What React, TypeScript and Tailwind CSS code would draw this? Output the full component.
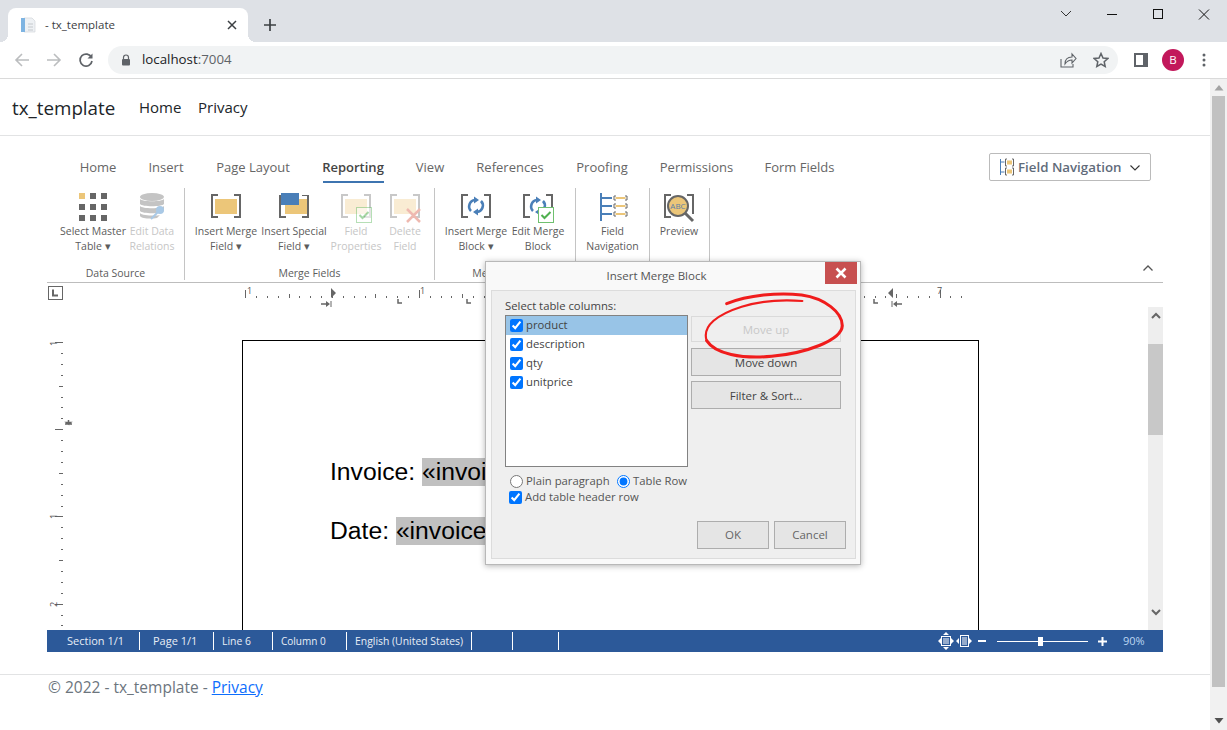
import React from "react";

const G = "#666666";
const Y = "#ecc679";
const B = "#4a7fb8";

function Brackets({ c = G }: { c?: string }) {
  return (
    <>
      <path d="M8 3H2V25H8" fill="none" stroke={c} strokeWidth="2" />
      <path d="M24 3H30V25H24" fill="none" stroke={c} strokeWidth="2" />
    </>
  );
}
function Check({ x, y }: { x: number; y: number }) {
  return (
    <g transform={`translate(${x} ${y})`}>
      <rect x="0.5" y="0.5" width="15" height="15" fill="#fff" stroke="#6fc06f" />
      <path d="M3.5 8l3 3 6-6" fill="none" stroke="#4fb04f" strokeWidth="2" />
    </g>
  );
}
const Svg = ({ children }: { children: React.ReactNode }) => (
  <svg width="32" height="32" viewBox="0 0 32 32" className="block">{children}</svg>
);
const Grid = () => (
  <Svg>
    {[0, 1, 2].flatMap((r) =>
      [0, 1, 2].map((c) => (
        <rect key={`${r}${c}`} x={2 + c * 11} y={1 + r * 11} width="6" height="6" fill={r === 0 && c === 0 ? Y : G} />
      ))
    )}
  </Svg>
);
const Db = () => (
  <Svg>
    <ellipse cx="16" cy="5" rx="12" ry="4" fill="#c4c4c4" />
    <path d="M4 7c2 3 22 3 24 0v5c-2 3-22 3-24 0zM4 14c2 3 22 3 24 0v5c-2 3-22 3-24 0zM4 21c2 3 18 3 20 2l-3 3c-5 1-15 1-17-2z" fill="#c4c4c4" />
    <circle cx="24" cy="18" r="4" fill="#a9c9e6" />
    <path d="M22 20l-7 7" stroke="#a9c9e6" strokeWidth="2" />
  </Svg>
);
const MergeField = () => (
  <Svg><Brackets /><rect x="5" y="7" width="22" height="15" fill={Y} /></Svg>
);
const SpecialField = () => (
  <Svg>
    <Brackets />
    <rect x="0" y="0" width="32" height="3" fill="#fff" />
    <rect x="7" y="7" width="22" height="15" fill={Y} />
    <rect x="3" y="1" width="18" height="12" fill={B} />
  </Svg>
);
const FieldProps = () => (
  <Svg>
    <Brackets c="#c8c8c8" />
    <rect x="5" y="7" width="22" height="15" fill="#f9ecd3" />
    <g opacity="0.5"><Check x={16} y={15} /></g>
  </Svg>
);
const DeleteField = () => (
  <Svg>
    <Brackets c="#c8c8c8" />
    <rect x="5" y="7" width="22" height="15" fill="#f9ecd3" />
    <path d="M18 17l13 13M31 17L18 30" stroke="#eeb9b0" strokeWidth="2.5" />
  </Svg>
);
const Cycle = () => (
  <>
    <path d="M15 8a6.500 6.500 0 0 0-4 11" fill="none" stroke={B} strokeWidth="2.600" />
    <path d="M17 20a6.500 6.500 0 0 0 4-11" fill="none" stroke={B} strokeWidth="2.600" />
    <path d="M14 4.500l5 3.500-5 3.500zM18 16.500l-5 3.500 5 3.500z" fill={B} />
  </>
);
const MergeBlock = () => <Svg><Brackets /><Cycle /></Svg>;
const EditBlock = () => <Svg><Brackets /><Cycle /><Check x={16} y={15} /></Svg>;
const Nav = ({ s = 32 }: { s?: number }) => (
  <svg width={s} height={s} viewBox="0 0 32 32" className="block">
    <path d="M4 1v28" stroke={B} strokeWidth="2" />
    <path d="M4 6h11M4 14h11M4 22h11" stroke={B} strokeWidth="2" />
    {[4, 12, 20].map((y) => (
      <g key={y}>
        <path d={`M19 ${y}h-2v4h2M28 ${y}h2v4h-2`} fill="none" stroke={G} strokeWidth="1" />
        <rect x="18.5" y={y + 1} width="10" height="2" fill={Y} />
      </g>
    ))}
  </svg>
);
const NavSmall = () => (
  <svg width="16" height="18" viewBox="0 0 16 18" className="block">
    <path d="M1.500 1v16M1.500 4h4M1.500 14h4" stroke={B} strokeWidth="1" />
    <path d="M8 1H6.500v7H8M13 1h1.500v7H13M8 10H6.500v7H8M13 10h1.500v7H13" fill="none" stroke={G} strokeWidth="1" />
    <rect x="8" y="2.500" width="5" height="4" fill={Y} />
    <rect x="8" y="11.500" width="5" height="4" fill={Y} />
  </svg>
);
const Preview = () => (
  <Svg>
    <Brackets />
    <rect x="24" y="22" width="8" height="4" fill="#fff" />
    <path d="M22 21l8 8" stroke={G} strokeWidth="3" />
    <circle cx="15" cy="14" r="10" fill={Y} stroke={G} strokeWidth="2" />
    <text x="15" y="17" textAnchor="middle" fontSize="8" fill="#5b7fa8" fontFamily="Open Sans, sans-serif">ABC</text>
  </Svg>
);

function RBtn({ w, icon, l1, l2, off }: { w: string; icon: React.ReactNode; l1: string; l2: string; off?: boolean }) {
  return (
    <div className={`${w} flex flex-col items-center pt-[4px] text-[10.5px] leading-[15px] whitespace-nowrap ${off ? "text-[#c6c6c6]" : "text-[#5c5c5c]"}`}>
      {icon}
      <span>{l1}</span>
      <span>{l2}</span>
    </div>
  );
}
function Group({ w, pl, label, children }: { w: string; pl: string; label: string; children: React.ReactNode }) {
  return (
    <div className={`${w} h-[92px] flex flex-col border-r border-[#c4c4c4]`}>
      <div className={`flex h-[78px] ${pl}`}>{children}</div>
      <div className="h-[14px] leading-[15px] text-[10.5px] text-[#5c5c5c] text-center">{label}</div>
    </div>
  );
}

const tabs: [string, string][] = [
  ["Home", "w-[38px]"], ["Insert", "w-[35px]"], ["Page Layout", "w-[76px]"], ["Reporting", "w-[61px]"], ["View", "w-[30px]"],
  ["References", "w-[67px]"], ["Proofing", "w-[54px]"], ["Permissions", "w-[72px]"], ["Form Fields", "w-[71px]"],
];

function Ruler() {
  const ticks: React.ReactNode[] = [];
  for (let i = -8; i < 60; i++) {
    const x = 285 + i * 10.85;
    if (x < 195 || x > 925) continue;
    const major = (i + 800) % 8 === 0;
    const mid = (i + 800) % 4 === 0 && !major;
    ticks.push(<rect key={i} x={Math.round(x)} y={mid ? 11 : major ? 7 : 13} width="1" height={mid ? 4 : major ? 8 : 2} fill={G} />);
  }
  return (
    <svg width="1116" height="24" viewBox="0 0 1116 24" className="block">
      <rect x="1.5" y="3.5" width="14" height="13" fill="#fff" stroke={G} />
      <path d="M6 6.500v6h5" fill="none" stroke={G} strokeWidth="2" />
      {ticks}
      <text x="200" y="11" fontSize="9" fill="#555" fontFamily="Open Sans, sans-serif">1</text>
      <text x="373" y="11" fontSize="9" fill="#555" fontFamily="Open Sans, sans-serif">1</text>
      <text x="890" y="11" fontSize="9" fill="#555" fontFamily="Open Sans, sans-serif">7</text>
      <path d="M284 5l5 5-5 5zM846 5l-5 5 5 5z" fill={G} />
      <path d="M274 21h6M855 21h-6" stroke={G} strokeWidth="1.500" fill="none" />
      <path d="M279 18l4 3-4 3zM850 18l-4 3 4 3z" fill={G} />
      <path d="M284 18v6M845 18v6" stroke={G} strokeWidth="1" fill="none" />
      <path d="M351 16v4h4M420 16v4h4M827 16v4h4" stroke={G} strokeWidth="1.500" fill="none" />
    </svg>
  );
}
function VRuler() {
  const ticks: React.ReactNode[] = [];
  for (let i = 0; i < 28; i++) {
    const y = 35 + i * 10.9;
    const major = i % 8 === 0;
    const mid = i % 4 === 0 && !major;
    ticks.push(<rect key={i} x={major ? 8 : mid ? 12 : 14} y={Math.round(y)} width={major ? 8 : mid ? 4 : 2} height="1" fill={G} />);
  }
  return (
    <svg width="27" height="323" viewBox="0 0 27 323" className="block shrink-0">
      {ticks}
      <text x="0" y="0" fontSize="9" fill="#555" fontFamily="Open Sans, sans-serif" transform="translate(10 39) rotate(-90)">1</text>
      <text x="0" y="0" fontSize="9" fill="#555" fontFamily="Open Sans, sans-serif" transform="translate(10 212) rotate(-90)">1</text>
      <text x="0" y="0" fontSize="9" fill="#555" fontFamily="Open Sans, sans-serif" transform="translate(10 300) rotate(-90)">2</text>
      <path d="M18 117h7M21.500 113v4l-2-1.500h4l-2 1.500" stroke={G} strokeWidth="1.500" fill="none" />
    </svg>
  );
}

function ListRow({ t, sel }: { t: string; sel?: boolean }) {
  return (
    <div className={`h-[19px] flex items-center pl-[4px] gap-[3px] ${sel ? "bg-[#98c4e7]" : ""}`}>
      <input type="checkbox" checked readOnly className="w-[13px] h-[13px] m-0 accent-[#0075ff]" />
      <span className="pb-[1px] leading-[16px]">{t}</span>
    </div>
  );
}
const dlgBtn = "border border-[#adadad] bg-[#e5e5e5] flex items-center justify-center text-[11.500px]";

function Dialog() {
  return (
    <div className="absolute left-[485px] top-[261px] w-[376px] h-[304px] bg-[#f9f9f9] border border-[#b8b8b8] shadow-[0_1px_6px_rgba(0,0,0,0.3)] flex flex-col text-[#444] text-[11.300px]">
      <div className="h-[28px] flex justify-center items-center text-[11.500px] text-[#555] pr-[33px]">Insert Merge Block</div>
      <div className="absolute right-[3px] top-0 w-[32px] h-[22px] bg-[#c75050] flex items-center justify-center">
        <svg width="12" height="12" viewBox="0 0 12 12"><path d="M1.500 1.500l9 9M10.500 1.500l-9 9" stroke="#fff" strokeWidth="2.600" /></svg>
      </div>
      <div className="ml-[5px] w-[365px] h-[269px] bg-[#efefef] border border-[#dcdcdc] pl-[13px] pt-[6px] flex flex-col">
        <div className="h-[18px] leading-[17px] text-[#444]">Select table columns:</div>
        <div className="flex">
          <div className="w-[183px] h-[152px] bg-white border border-[#828282] text-[#444]">
            <ListRow t="product" sel />
            <ListRow t="description" />
            <ListRow t="qty" />
            <ListRow t="unitprice" />
          </div>
          <div className="ml-[3px] w-[150px] flex flex-col pt-[1px]">
            <div className="h-[26px] mb-[6px] pt-[1px] border border-[#dadada] bg-[#efefef] text-[#c8c8c8] flex items-center justify-center text-[11.500px]">Move up</div>
            <div className={`h-[28px] mb-[5px] pt-[1px] ${dlgBtn}`}>Move down</div>
            <div className={`h-[28px] pt-[1px] ${dlgBtn}`}>Filter &amp; Sort...</div>
          </div>
        </div>
        <div className="h-[16px] mt-[6px] flex items-center pl-[5px] text-[#555] leading-[16px]">
          <input type="radio" readOnly className="w-[13px] h-[13px] m-0" />
          <span className="ml-[3px] w-[91px]">Plain paragraph</span>
          <input type="radio" checked readOnly className="w-[13px] h-[13px] m-0 accent-[#0075ff]" />
          <span className="ml-[3px]">Table Row</span>
        </div>
        <div className="h-[16px] flex items-center pl-[4px] text-[#555] leading-[16px]">
          <input type="checkbox" checked readOnly className="w-[13px] h-[13px] m-0 accent-[#0075ff]" />
          <span className="ml-[3px]">Add table header row</span>
        </div>
        <div className="flex justify-end gap-[5px] mt-[16px] pr-[9px] text-[#666]">
          <div className={`w-[72px] h-[28px] ${dlgBtn}`}>OK</div>
          <div className={`w-[72px] h-[28px] ${dlgBtn}`}>Cancel</div>
        </div>
      </div>
      <svg width="160" height="80" viewBox="615 81 480 240" className="absolute left-[204px] top-[24px]">
        <path d="M725 134C790 108 880 100 950 108C1020 118 1072 160 1072 200C1070 245 960 283 860 292C770 300 690 285 665 245" fill="none" stroke="#f01c1c" strokeWidth="9" strokeLinecap="round" />
        <path d="M665 245C650 200 700 165 770 143C830 125 900 122 952 126" fill="none" stroke="#f01c1c" strokeWidth="6.500" strokeLinecap="round" />
      </svg>
    </div>
  );
}

function Browser() {
  return (
    <>
      <div className="h-[42px] bg-[#dee1e6] flex items-end pl-[8px] relative">
        <div className="relative w-[240px] h-[34px] bg-white rounded-t-[8px] flex items-center pl-[12px]">
          <div className="absolute -left-[8px] bottom-0 w-[8px] h-[8px] bg-[radial-gradient(circle_at_0_0,#dee1e6_8px,#ffffff_8px)]" />
          <div className="absolute -right-[8px] bottom-0 w-[8px] h-[8px] bg-[radial-gradient(circle_at_100%_0,#dee1e6_8px,#ffffff_8px)]" />
          <svg width="16" height="16" viewBox="0 0 16 16" className="shrink-0">
            <path d="M4 1h8l3 3v11H4z" fill="#eef1f4" stroke="#d3d6da" strokeWidth="0.700" />
            <rect x="1" y="1" width="4" height="14" fill="#7eb4e2" />
            <path d="M8 7h5M8 10h5M8 13h5" stroke="#c4c8cc" />
          </svg>
          <span className="ml-[9px] text-[11.500px] text-[#3c4043]">- tx_template</span>
          <svg width="10" height="10" viewBox="0 0 10 10" className="absolute right-[11px] top-[12px]"><path d="M1 1l8 8M9 1l-8 8" stroke="#3c4043" strokeWidth="1.500" /></svg>
        </div>
        <svg width="14" height="14" viewBox="0 0 14 14" className="ml-[15px] mb-[10px]"><path d="M7 1v12M1 7h12" stroke="#3c4043" strokeWidth="1.700" /></svg>
        <div className="ml-auto self-start flex">
          <svg width="46" height="28" viewBox="0 0 46 28"><path d="M18 11l5 5 5-5" fill="none" stroke="#333" strokeWidth="1" /></svg>
          <svg width="46" height="28" viewBox="0 0 46 28"><path d="M18 14.500h10" stroke="#111" strokeWidth="1" /></svg>
          <svg width="46" height="28" viewBox="0 0 46 28"><rect x="18.500" y="9.500" width="9" height="9" fill="none" stroke="#111" /></svg>
          <svg width="46" height="28" viewBox="0 0 46 28"><path d="M18 9.500l10 10M28 9.500l-10 10" stroke="#111" strokeWidth="1" /></svg>
        </div>
      </div>
      <div className="h-[37px] bg-white border-b border-[#dadada] flex items-center pb-[1px]">
        <svg width="16" height="16" viewBox="0 0 16 16" className="ml-[14px]"><path d="M15 8H2M8 2L2 8l6 6" fill="none" stroke="#bbbdbf" strokeWidth="1.600" /></svg>
        <svg width="16" height="16" viewBox="0 0 16 16" className="ml-[16px]"><path d="M1 8h13M8 2l6 6-6 6" fill="none" stroke="#bbbdbf" strokeWidth="1.600" /></svg>
        <svg width="16" height="16" viewBox="0 0 16 16" className="ml-[16px]"><path d="M13.500 5.500A6 6 0 1 0 14 9" fill="none" stroke="#5f6368" strokeWidth="1.700" /><path d="M14.500 1.500v5h-5z" fill="#5f6368" /></svg>
        <div className="ml-[14px] w-[1010px] h-[28px] rounded-full bg-[#f1f3f4] flex items-center pl-[12px] relative">
          <svg width="12" height="12" viewBox="0 0 12 12"><path d="M3.500 5V3.500a2.500 2.500 0 0 1 5 0V5" fill="none" stroke="#5f6368" strokeWidth="1.200" /><rect x="2" y="5" width="8" height="6.500" rx="1" fill="#5f6368" /></svg>
          <span className="ml-[10px] pt-[1px] text-[13.300px] text-[#202124]">localhost<span className="text-[#5f6368]">:7004</span></span>
          <svg width="18" height="18" viewBox="0 0 18 18" className="absolute right-[41px] top-[5px]"><path d="M2 8v8h12v-3" fill="none" stroke="#5f6368" strokeWidth="1.100" /><path d="M6 13c0-5 3-7 7-7V3l4 4.500-4 4.500V9c-3 0-5 1-7 4z" fill="none" stroke="#5f6368" strokeWidth="1.100" /></svg>
          <svg width="16" height="16" viewBox="0 0 16 16" className="absolute right-[9px] top-[6px]"><path d="M8 1.500l2 4.500 4.800.5-3.600 3.200 1 4.800L8 12.200 3.800 14.500l1-4.800L1.200 6.500 6 6z" fill="none" stroke="#5f6368" strokeWidth="1.500" /></svg>
        </div>
        <svg width="14" height="14" viewBox="0 0 14 14" className="ml-[16px]"><path d="M0 0h14v14H0zM2 2v10h7V2z" fill="#5f6368" fillRule="evenodd" /></svg>
        <div className="ml-[14px] w-[22px] h-[22px] rounded-full bg-[#c2185b] text-white text-[11.500px] flex items-center justify-center">B</div>
        <svg width="4" height="14" viewBox="0 0 4 14" className="ml-[18px]"><circle cx="2" cy="2" r="1.500" fill="#5f6368" /><circle cx="2" cy="7" r="1.500" fill="#5f6368" /><circle cx="2" cy="12" r="1.500" fill="#5f6368" /></svg>
      </div>
    </>
  );
}

export default function App() {
  return (
    <div className="relative w-[1227px] h-[730px] overflow-hidden bg-white font-['Open_Sans',sans-serif]">
      <Browser />
      <div className="flex h-[651px]">
        <div className="w-[1210px] flex flex-col">
          <div className="h-[57px] border-b border-[#e2e3e4] flex items-center pl-[12px] text-[#212529]">
            <span className="text-[18.800px] w-[127px] pt-[2px]">tx_template</span>
            <span className="text-[15px] w-[59px]">Home</span>
            <span className="text-[15px]">Privacy</span>
          </div>
          <div className="mx-[47px] w-[1116px] mt-[17px]">
            <div className="flex items-start justify-between pr-[12px]">
              <div className="flex gap-[31.500px] pl-[32px]">
                {tabs.map(([t, w]) => (
                  <div key={t} className={`${w} h-[30px] flex justify-center pt-[3px] whitespace-nowrap text-[13px] leading-[22px] ${t === "Reporting" ? "border-b-2 border-[#3d74b0] text-[#444] font-semibold" : "text-[#666]"}`}>{t}</div>
                ))}
              </div>
              <div className="w-[162px] h-[28px] border border-[#bbb] rounded-[2px] flex items-center pl-[9px] bg-white">
                <NavSmall />
                <span className="ml-[3px] pt-[2px] text-[13.300px] font-semibold text-[#5f6b7a] whitespace-nowrap">Field Navigation</span>
                <svg width="10" height="6" viewBox="0 0 10 6" className="ml-[9px] mt-[2px]"><path d="M0.500 0.500L5 5l4.500-4.500" fill="none" stroke="#333" strokeWidth="1.100" /></svg>
              </div>
            </div>
            <div className="mt-[5px] h-[95px] border-b border-[#bdbdbd] flex relative">
              <Group w="w-[138px]" pl="pl-[13px]" label="Data Source">
                <RBtn w="w-[66px]" icon={<Grid />} l1="Select Master" l2="Table ▾" />
                <RBtn w="w-[52px]" icon={<Db />} l1="Edit Data" l2="Relations" off />
              </Group>
              <Group w="w-[250px]" pl="pl-[7px]" label="Merge Fields">
                <RBtn w="w-[68px]" icon={<MergeField />} l1="Insert Merge" l2="Field ▾" />
                <RBtn w="w-[68px]" icon={<SpecialField />} l1="Insert Special" l2="Field ▾" />
                <RBtn w="w-[56px]" icon={<FieldProps />} l1="Field" l2="Properties" off />
                <RBtn w="w-[42px]" icon={<DeleteField />} l1="Delete" l2="Field" off />
              </Group>
              <Group w="w-[141px]" pl="pl-[8px]" label="Merge Blocks">
                <RBtn w="w-[66px]" icon={<MergeBlock />} l1="Insert Merge" l2="Block ▾" />
                <RBtn w="w-[58px]" icon={<EditBlock />} l1="Edit Merge" l2="Block" />
              </Group>
              <Group w="w-[74px]" pl="pl-[0px]" label="">
                <RBtn w="w-[73px]" icon={<Nav />} l1="Field" l2="Navigation" />
              </Group>
              <Group w="w-[60px]" pl="pl-[0px]" label="">
                <RBtn w="w-[58px]" icon={<Preview />} l1="Preview" l2="" />
              </Group>
              <svg width="10" height="6" viewBox="0 0 10 6" className="absolute right-[10px] top-[77px]"><path d="M0.500 5.500L5 1l4.500 4.500" fill="none" stroke="#555" strokeWidth="1.300" /></svg>
            </div>
            <Ruler />
            <div className="h-[323px] flex overflow-hidden bg-white">
              <VRuler />
              <div className="ml-[168px] mt-[33px] w-[737px] h-[500px] shrink-0 border border-black pt-[117px] pl-[87px] font-['Liberation_Sans',sans-serif] text-[24.700px] leading-[28px] text-black whitespace-nowrap">
                <div>Invoice: <span className="bg-[#c0c0c0] pb-[1px]">«invoi</span></div>
                <div className="mt-[31px]">Date: <span className="bg-[#c0c0c0] pb-[1px]">«invoice</span></div>
              </div>
              <div className="ml-auto w-[15px] h-[323px] bg-[#eeeeee] flex flex-col items-center">
                <svg width="10" height="7" viewBox="0 0 10 7" className="mt-[5px]"><path d="M1 6l4-4 4 4" fill="none" stroke="#666" strokeWidth="2" /></svg>
                <div className="w-[15px] h-[91px] bg-[#c8c8c8] mt-[25px]" />
                <svg width="10" height="7" viewBox="0 0 10 7" className="mt-[174px]"><path d="M1 1l4 4 4-4" fill="none" stroke="#666" strokeWidth="2" /></svg>
              </div>
            </div>
            <div className="h-[22px] bg-[#2c5999] flex items-center text-[10.400px] text-[#e8eef6] whitespace-nowrap relative">
              <div className="w-[93px] h-[18px] leading-[18px] pl-[20px] border-r border-white text-[11px]">Section 1/1</div>
              <div className="w-[74px] h-[18px] leading-[18px] pl-[13px] border-r border-white text-[11px]">Page 1/1</div>
              <div className="w-[59px] h-[18px] leading-[18px] pl-[8px] border-r border-white">Line 6</div>
              <div className="w-[74px] h-[18px] leading-[18px] pl-[8px] border-r border-white text-[10px]">Column 0</div>
              <div className="w-[125px] h-[18px] leading-[18px] pl-[8px] border-r border-white">English (United States)</div>
              <div className="w-[41px] h-[18px] border-r border-white" />
              <div className="w-[46px] h-[18px] border-r border-white" />
              <svg width="34" height="18" viewBox="0 0 34 18" className="ml-[379px]" fill="#fff">
                <rect x="3.500" y="4.500" width="9" height="9" fill="none" stroke="#fff" />
                <path d="M5 7h6M5 9h6M5 11h6" stroke="#fff" />
                <path d="M0 9l3-3v6zM16 9l-3-3v6zM8 0l3 3H5zM8 18l-3-3h6z" />
                <rect x="22.500" y="3.500" width="8" height="11" fill="none" stroke="#fff" />
                <path d="M24 6h5M24 8h5M24 10h5M24 12h5" stroke="#fff" />
                <path d="M18 9l3-3v6zM34 9l-3-3v6z" />
              </svg>
              <div className="ml-[6px] w-[8px] h-[2px] bg-white" />
              <div className="ml-[11px] w-[91px] h-[1px] bg-white relative">
                <div className="absolute left-[41px] -top-[4px] w-[5px] h-[9px] bg-white" />
              </div>
              <svg width="9" height="9" viewBox="0 0 9 9" className="ml-[10px]"><path d="M4.500 0v9M0 4.500h9" stroke="#fff" strokeWidth="2" /></svg>
              <span className="ml-[16px] text-[11px] text-[#bcd6f2]">90%</span>
            </div>
          </div>
          <div className="mt-[22px] border-t border-[#e2e3e4] pl-[48px] text-[15.500px] leading-[24px] text-[#6c757d]">
            © 2022 - tx_template - <span className="text-[#0d6efd] underline">Privacy</span>
          </div>
        </div>
        <div className="w-[17px] h-[651px] bg-[#f1f1f1] flex flex-col items-center">
          <svg width="10" height="6" viewBox="0 0 10 6" className="mt-[6px]"><path d="M5 0l4.500 5.500H0.500z" fill="#a3a3a3" /></svg>
          <div className="w-[13px] h-[591px] bg-[#c1c1c1] mt-[5px]" />
          <svg width="10" height="6" viewBox="0 0 10 6" className="mt-[31px]"><path d="M5 5.500L9.500 0H0.500z" fill="#505050" /></svg>
        </div>
      </div>
      <Dialog />
    </div>
  );
}
